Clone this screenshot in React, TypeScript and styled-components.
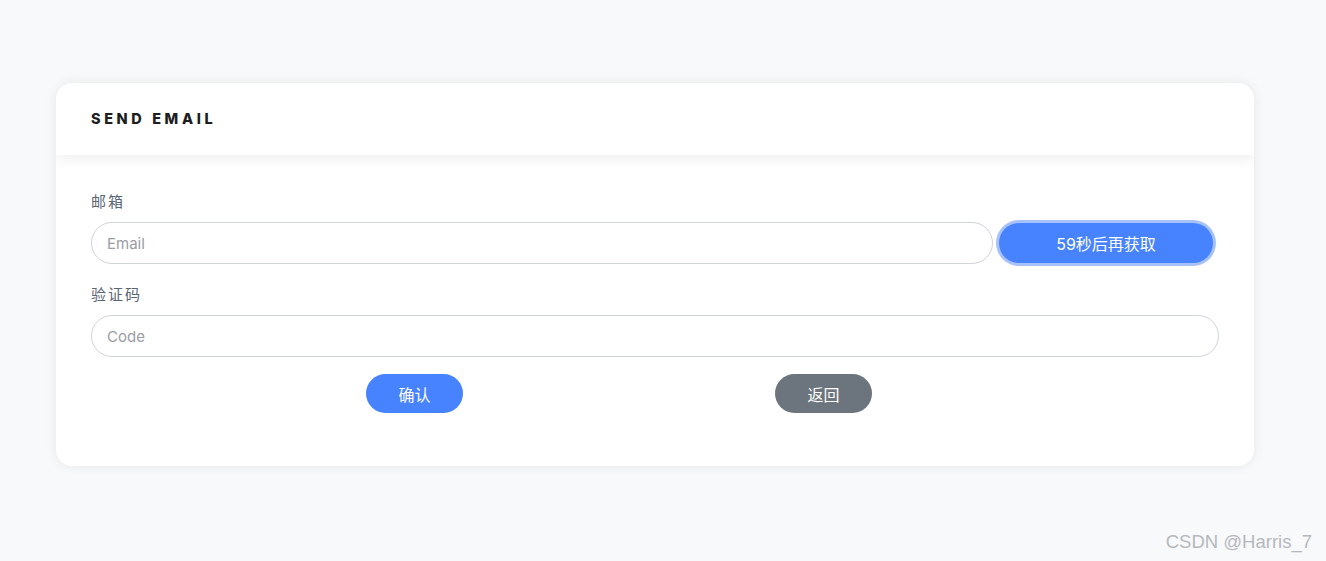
import styled, { createGlobalStyle } from "styled-components";

const GlobalStyle = createGlobalStyle`
  html, body {
    margin: 0;
    padding: 0;
    background: #f8f9fb;
    font-family: Inter, "Noto Sans CJK SC", sans-serif;
  }
`;

const Page = styled.div`
  position: relative;
  height: 561px;
  padding: 83px 72px 0 56px;
  box-sizing: border-box;
`;

const Card = styled.div`
  width: 1198px;
  height: 383px;
  background: #fff;
  border-radius: 16px;
  box-shadow: 0 0 12px rgba(0, 0, 0, 0.08);
  overflow: hidden;
`;

const CardHeader = styled.div`
  position: relative;
  z-index: 1;
  height: 72px;
  display: flex;
  align-items: center;
  padding: 0 35px 2px;
  box-sizing: border-box;
  background: #fff;
  box-shadow: 0 5px 12px rgba(0, 0, 0, 0.06);
`;

const Title = styled.h5`
  margin: 0;
  font-family: Inter, sans-serif;
  font-size: 14.5px;
  font-weight: 800;
  letter-spacing: 3.6px;
  color: #1d1d22;
`;

const CardBody = styled.div`
  padding: 36px 35px 0 35px;
`;

const Label = styled.div<{ $top?: number }>`
  font-family: "Noto Sans CJK SC", sans-serif;
  font-size: 15px;
  letter-spacing: 2px;
  color: #5b6675;
  line-height: 20px;
  margin-bottom: 11px;
  margin-top: ${({ $top }) => $top ?? 0}px;
`;

const Row = styled.div`
  display: flex;
  align-items: center;
  gap: 4px;
`;

const Input = styled.input<{ $width?: number }>`
  box-sizing: border-box;
  width: ${({ $width }) => ($width ? `${$width}px` : "100%")};
  height: 42px;
  border: 1px solid #cfd3da;
  border-radius: 21px;
  padding: 0 15px;
  font-family: Inter, sans-serif;
  font-size: 15px;
  color: #333;
  outline: none;
  &::placeholder {
    color: #9a9da3;
  }
`;

const Button = styled.button<{ $variant?: "primary" | "secondary" }>`
  box-sizing: border-box;
  border: none;
  border-radius: 20px;
  font-family: Inter, "Noto Sans CJK SC", sans-serif;
  font-size: 16px;
  color: #fff;
  cursor: pointer;
  background: ${({ $variant }) => ($variant === "secondary" ? "#6c757d" : "#4883ff")};
`;

const CountdownButton = styled(Button)`
  width: 214px;
  height: 40px;
  margin-left: 2px;
  box-shadow: 0 0 0 3px #a7c2fb;
`;

const Actions = styled.div`
  display: flex;
  padding-left: 275px;
  gap: 312px;
  margin-top: 17px;
`;

const ActionButton = styled(Button)`
  width: 97px;
  height: 39px;
`;

const Watermark = styled.div`
  position: absolute;
  right: 14px;
  bottom: 8px;
  font-family: "Liberation Sans", Arial, sans-serif;
  font-size: 18.5px;
  color: #b5b8bd;
`;

export default function App() {
  return (
    <>
      <GlobalStyle />
      <Page>
        <Card>
          <CardHeader>
            <Title>SEND EMAIL</Title>
          </CardHeader>
          <CardBody>
            <Label>邮箱</Label>
            <Row>
              <Input $width={902} placeholder="Email" />
              <CountdownButton>59秒后再获取</CountdownButton>
            </Row>
            <Label $top={20}>验证码</Label>
            <Input placeholder="Code" />
            <Actions>
              <ActionButton>确认</ActionButton>
              <ActionButton $variant="secondary">返回</ActionButton>
            </Actions>
          </CardBody>
        </Card>
        <Watermark>CSDN @Harris_7</Watermark>
      </Page>
    </>
  );
}
